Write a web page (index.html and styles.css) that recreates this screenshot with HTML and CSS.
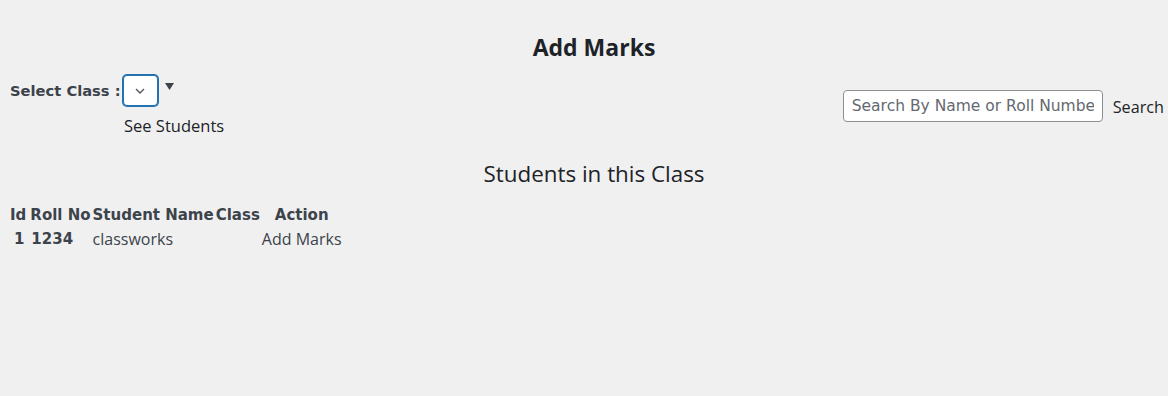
FILE: index.html
```html
<!DOCTYPE html>
<html>
<head>
<meta charset="utf-8">
<link rel="stylesheet" href="styles.css">
</head>
<body>
<div class="page">
  <h1 class="title">Add Marks</h1>
  <div class="toolbar">
    <div class="class-picker">
      <div class="picker-row">
        <span class="picker-label">Select Class :</span>
        <span class="select-box"><svg width="12" height="8" viewBox="0 0 12 8"><path d="M2 2 L6 6 L10 2" fill="none" stroke="#50575e" stroke-width="1.4"/></svg></span>
        <span class="caret"><svg width="9" height="7" viewBox="0 0 9 7"><path d="M0 0 L9 0 L4.5 7 Z" fill="#3c434a"/></svg></span>
      </div>
      <div class="see-btn">See Students</div>
    </div>
    <div class="search">
      <input class="search-input" type="text" placeholder="Search By Name or Roll Number">
      <span class="search-btn">Search</span>
    </div>
  </div>
  <h2 class="subtitle">Students in this Class</h2>
  <table class="students">
    <thead>
      <tr><th class="idh">Id</th><th>Roll No</th><th>Student Name</th><th>Class</th><th>Action</th></tr>
    </thead>
    <tbody>
      <tr><td class="id">1</td><td class="roll">1234</td><td class="name">classworks</td><td></td><td class="add">Add Marks</td></tr>
    </tbody>
  </table>
</div>
</body>
</html>
```
FILE: styles.css
```css
html, body {
  margin: 0;
  padding: 0;
  background: #f0f0f1;
}
body {
  font-family: "Open Sans", "Noto Sans", sans-serif;
  color: #3c434a;
}
.page {
  padding: 0 4px 0 10px;
}
.title {
  margin: 0;
  padding: 33px 0 0 14px;
  text-align: center;
  font-size: 23px;
  font-weight: 700;
  color: #1d2327;
  line-height: 28px;
}
.toolbar {
  display: flex;
  justify-content: space-between;
  align-items: center;
  margin-top: 14px;
}
.class-picker {
  display: flex;
  flex-direction: column;
}
.picker-row {
  display: flex;
  align-items: flex-start;
}
.picker-label {
  font-family: "DejaVu Sans", Verdana, sans-serif;
  font-weight: 700;
  font-size: 14.7px;
  margin-top: 7px;
  color: #3c434a;
}
.select-box {
  box-sizing: border-box;
  width: 35px;
  height: 31px;
  margin-left: 2px;
  border: 1px solid #2271b1;
  box-shadow: 0 0 0 1px #2271b1;
  border-radius: 4px;
  background: #fff;
  display: flex;
  align-items: center;
  justify-content: center;
}
.caret {
  display: flex;
  margin-left: 7px;
  margin-top: 8px;
}
.see-btn {
  margin-left: 114px;
  margin-top: 9px;
  font-size: 16.5px;
  color: #1d2327;
  line-height: 22px;
}
.search {
  display: flex;
  align-items: center;
}
.search-input {
  box-sizing: border-box;
  width: 260px;
  height: 32px;
  border: 1px solid #8c8f94;
  border-radius: 4px;
  background: #fff;
  padding: 0 8px;
  font-family: "DejaVu Sans", Verdana, sans-serif;
  font-size: 15.5px;
  color: #2c3338;
}
.search-input::placeholder {
  color: #646970;
}
.search-btn {
  margin-left: 10px;
  margin-top: 2px;
  font-size: 16.2px;
  color: #1d2327;
}
.subtitle {
  margin: 22px 0 0;
  padding-left: 14px;
  text-align: center;
  font-weight: 400;
  font-size: 22.4px;
  line-height: 30px;
  color: #1d2327;
}
.students {
  margin-top: 13px;
  margin-left: -2px;
  border-spacing: 2px;
  font-size: 16px;
}
.students th {
  font-family: "DejaVu Sans", Verdana, sans-serif;
  font-weight: 700;
  font-size: 15px;
  padding: 1px 0;
  line-height: 20px;
  color: #3c434a;
}
.students th.idh {
  padding-right: 2px;
}
.students td {
  padding: 1px 0;
  line-height: 20px;
  color: #3c434a;
}
.students td.id, .students td.roll {
  font-family: "DejaVu Sans", Verdana, sans-serif;
  font-weight: 700;
  font-size: 15px;
}
.students td.id {
  text-align: center;
}
.students td.roll {
  padding-left: 1px;
}
```
